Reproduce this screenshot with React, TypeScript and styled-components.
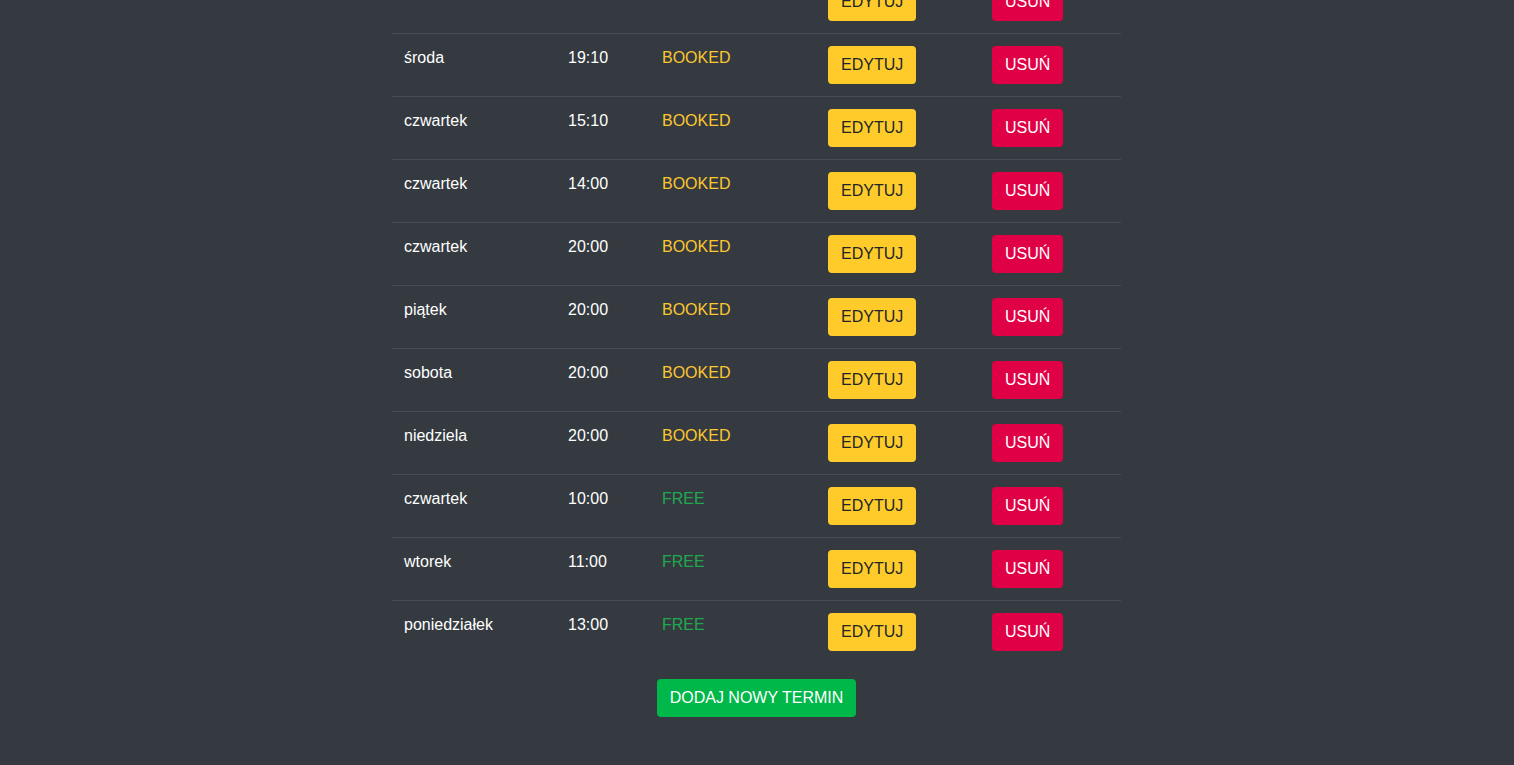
import React, { useLayoutEffect } from "react";
import styled, { createGlobalStyle } from "styled-components";

const Global = createGlobalStyle`
  html, body { margin: 0; padding: 0; background: #343a40; }
  body { font-family: "Liberation Sans", Arial, sans-serif; font-size: 16px; line-height: 24px; color: #fff; }
`;

const Page = styled.div`
  display: flex;
  flex-direction: column;
  align-items: center;
  padding: 24px 1px 48px 0;
`;

const Title = styled.h2`
  margin: 0 0 24px;
  font-size: 32px;
  line-height: 40px;
  font-weight: 500;
  color: #fff;
`;

const Table = styled.table`
  width: 729px;
  border-collapse: collapse;
  table-layout: fixed;
`;

const Th = styled.th<{ $w?: number }>`
  box-sizing: border-box;
  width: ${(p) => (p.$w ? `${p.$w}px` : "auto")};
  text-align: left;
  padding: 12px;
  font-weight: 700;
  border-bottom: 2px solid #454d55;
  color: #fff;
`;

const Row = styled.tr`
  & + & td { border-top: 1px solid #454d55; }
`;

const Td = styled.td`
  padding: 12px;
  vertical-align: top;
  color: #fff;
`;

const Status = styled.span<{ $free: boolean }>`
  color: ${(p) => (p.$free ? "#1fa84f" : "#fcc62f")};
`;

const Btn = styled.button<{ $kind: "edit" | "del" | "add" }>`
  font-family: inherit;
  font-size: 16px;
  line-height: 24px;
  padding: 6px 12px;
  border: 1px solid transparent;
  border-radius: 4px;
  cursor: pointer;
  background: ${(p) => (p.$kind === "edit" ? "#fecb2b" : p.$kind === "del" ? "#e00045" : "#00b74a")};
  color: ${(p) => (p.$kind === "edit" ? "#212529" : "#fff")};
`;

const AddWrap = styled.div`
  margin-top: 16px;
`;

type Item = { day: string; time: string; status: "BOOKED" | "FREE" };

const items: Item[] = [
  { day: "poniedziałek", time: "18:00", status: "BOOKED" },
  { day: "wtorek", time: "17:30", status: "BOOKED" },
  { day: "wtorek", time: "19:10", status: "BOOKED" },
  { day: "środa", time: "19:10", status: "BOOKED" },
  { day: "czwartek", time: "15:10", status: "BOOKED" },
  { day: "czwartek", time: "14:00", status: "BOOKED" },
  { day: "czwartek", time: "20:00", status: "BOOKED" },
  { day: "piątek", time: "20:00", status: "BOOKED" },
  { day: "sobota", time: "20:00", status: "BOOKED" },
  { day: "niedziela", time: "20:00", status: "BOOKED" },
  { day: "czwartek", time: "10:00", status: "FREE" },
  { day: "wtorek", time: "11:00", status: "FREE" },
  { day: "poniedziałek", time: "13:00", status: "FREE" },
];

export default function App() {
  useLayoutEffect(() => {
    window.scrollTo(0, document.documentElement.scrollHeight);
    const t = setTimeout(() => window.scrollTo(0, document.documentElement.scrollHeight), 0);
    return () => clearTimeout(t);
  }, []);
  return (
    <>
      <Global />
      <Page>
        <Title>Terminy</Title>
        <Table>
          <thead>
            <tr>
              <Th $w={164}>Dzień</Th>
              <Th $w={94}>Godzina</Th>
              <Th $w={166}>Status</Th>
              <Th $w={164}>Edytuj</Th>
              <Th>Usuń</Th>
            </tr>
          </thead>
          <tbody>
            {items.map((it, i) => (
              <Row key={i}>
                <Td>{it.day}</Td>
                <Td>{it.time}</Td>
                <Td>
                  <Status $free={it.status === "FREE"}>{it.status}</Status>
                </Td>
                <Td>
                  <Btn $kind="edit">EDYTUJ</Btn>
                </Td>
                <Td>
                  <Btn $kind="del">USUŃ</Btn>
                </Td>
              </Row>
            ))}
          </tbody>
        </Table>
        <AddWrap>
          <Btn $kind="add">DODAJ NOWY TERMIN</Btn>
        </AddWrap>
      </Page>
    </>
  );
}
